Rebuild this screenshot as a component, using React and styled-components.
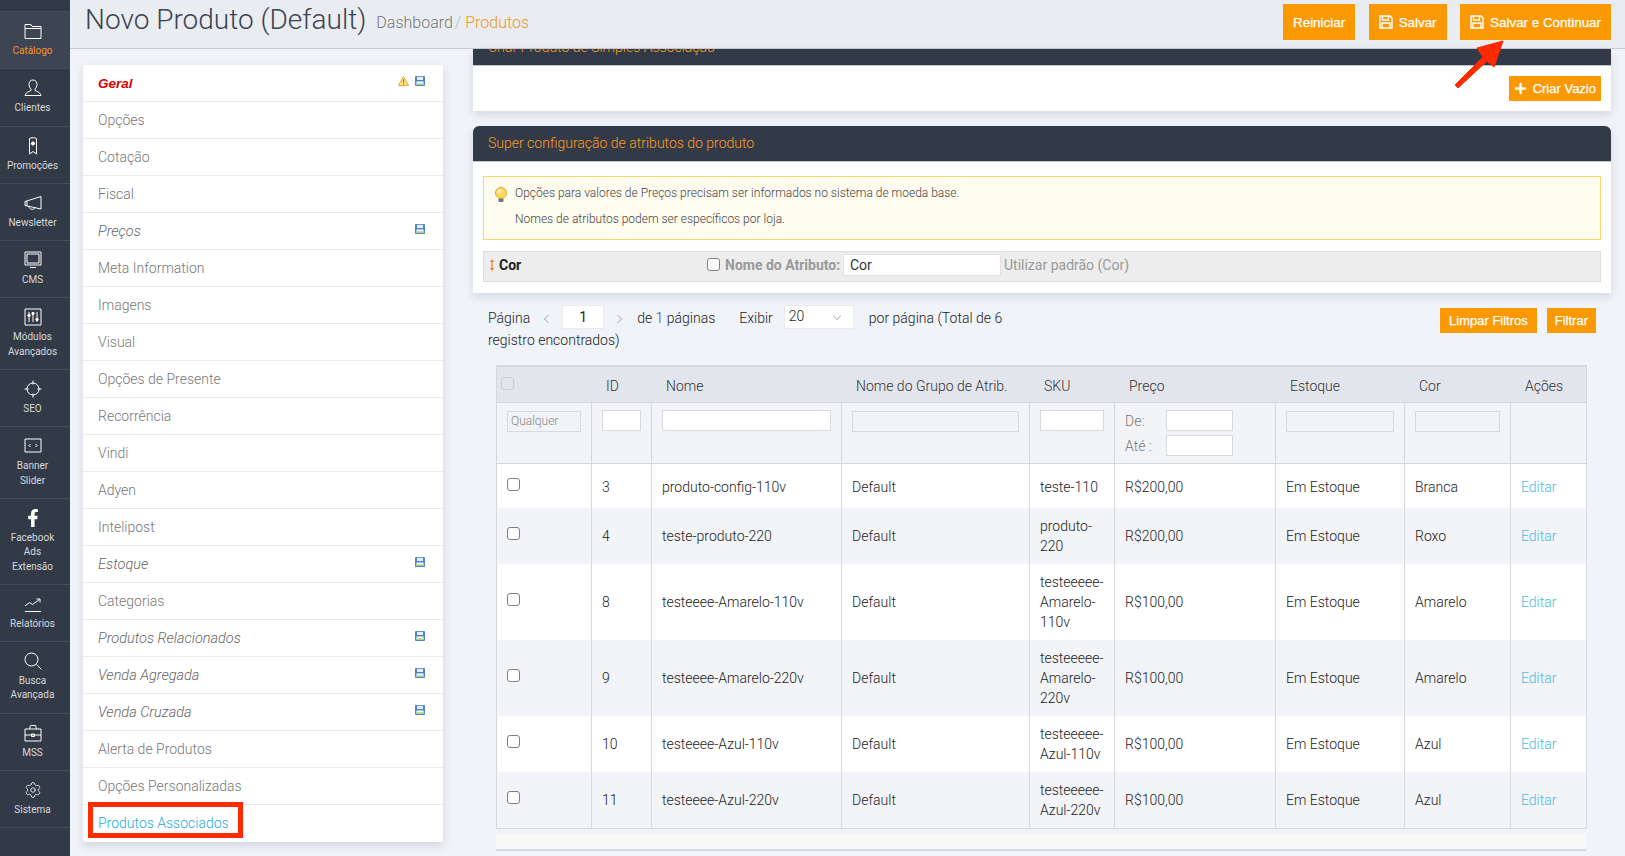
import React from 'react'
import styled, { createGlobalStyle } from 'styled-components'
import { Settings } from 'lucide-react'
import { FaFacebookF, FaPlus } from 'react-icons/fa'

const orange = '#fb9905'
const dark = '#333a47'

const GlobalStyle = createGlobalStyle`
  html, body { margin: 0; height: 100%; overflow: hidden; background: #f0f3f8; }
  body { font-family: Roboto, "Liberation Sans", sans-serif; font-size: 14px; color: #333; }
  * { box-sizing: border-box; }
`

const Shell = styled.div`
  position: relative;
  display: flex;
  width: 1625px;
  height: 856px;
  overflow: hidden;
`

/* ---- sidebar ---- */
const Sidebar = styled.nav`
  flex: 0 0 70px;
  background: ${dark};
  padding-top: 11px;
`
const SideItem = styled.a`
  display: flex;
  flex-direction: column;
  align-items: center;
  padding: 10px 5px 10px 0;
  border-top: 1px solid #434a58;
  background: ${p => (p.$active ? '#3d4452' : 'transparent')};
  color: ${p => (p.$active ? '#f7941d' : '#d5d8dc')};
  font-size: 10px;
  line-height: 14.3px;
  text-align: center;
  svg { display: block; width: 18px; height: 18px; margin-bottom: 4px; color: #fff; }
  &:last-child { border-bottom: 1px solid #434a58; }
`
const Line = styled.svg.attrs({ viewBox: '0 0 18 18', fill: 'none', stroke: 'currentColor', strokeWidth: 1 })``

const icons = {
  folder: <Line><path d="M1 2.5h6l1 2h9v12H1z M1 6.5h16" /></Line>,
  user: <Line><path d="M9 1c-2.500 0-4 2-4 4.500 0 2 1 3.500 2 4.500v1.500c-2 1-5.500 2-6 5h16c-.5-3-4-4-6-5V10c1-1 2-2.500 2-4.500C13 3 11.500 1 9 1z" /></Line>,
  ribbon: <Line><path d="M5.500 1.500c1-1 6-1 7 0V17L9 14.500 5.500 17z" /><circle cx="9" cy="6.500" r="1.600" fill="currentColor" /></Line>,
  megaphone: <Line><path d="M1 7.500v4l16 3.500V2.500z M1 7.500h2v4H1 M5 12.500c0 3 5 4 6 1" /></Line>,
  monitor: <Line><path d="M1 1h16v13H1z M3 3h12v9H3z M6 16.500h6" /></Line>,
  sliders: <Line><path d="M1 1h16v16H1z M5 4v10 M9 4v10 M13 4v10" /><circle cx="5" cy="7.500" r="1.200" fill="currentColor" /><circle cx="9" cy="5.500" r="1.200" fill="currentColor" /><circle cx="13" cy="11.500" r="1.200" fill="currentColor" /></Line>,
  target: <Line><circle cx="9" cy="9" r="6" /><path d="M9 .5v4 M9 13.500v4 M.5 9h4 M13.500 9h4" /></Line>,
  banner: <Line><path d="M1 2h16v13H1z M6.500 7l-1.500 1.500L6.500 10 M11.500 7L13 8.500 11.500 10" /></Line>,
  chart: <Line><path d="M1 16.500h16 M1 11l4.500-3.500 3 2 7-5 M12.500 4h3.500v3.500" /></Line>,
  search: <Line><circle cx="7.500" cy="7.500" r="6.500" /><path d="M12.500 12.500l5 5" /></Line>,
  case: <Line><path d="M1 5h16v12H1z M1 11h16 M5.500 5l1-3.500h5L12.500 5 M7.500 10h3v2.500h-3z" /></Line>,
}

const sideItems = [
  { label: ['Catálogo'], icon: icons.folder, active: true },
  { label: ['Clientes'], icon: icons.user },
  { label: ['Promoções'], icon: icons.ribbon },
  { label: ['Newsletter'], icon: icons.megaphone },
  { label: ['CMS'], icon: icons.monitor },
  { label: ['Módulos', 'Avançados'], icon: icons.sliders },
  { label: ['SEO'], icon: icons.target },
  { label: ['Banner', 'Slider'], icon: icons.banner },
  { label: ['Facebook', 'Ads', 'Extensão'], icon: <FaFacebookF /> },
  { label: ['Relatórios'], icon: icons.chart },
  { label: ['Busca', 'Avançada'], icon: icons.search },
  { label: ['MSS'], icon: icons.case },
  { label: ['Sistema'], icon: <Settings strokeWidth={1.1} /> },
]

/* ---- header ---- */
const Main = styled.div`
  flex: 1;
  display: flex;
  flex-direction: column;
  min-width: 0;
`
const Header = styled.header`
  flex: 0 0 49px;
  display: flex;
  align-items: flex-start;
  padding: 0 14px 0 15px;
  background: #e9ecf1;
  border-bottom: 1px solid #c6c9ce;
`
const Title = styled.h1`
  margin: 0;
  font-size: 28px;
  font-weight: 300;
  line-height: 40px;
  color: #3c4450;
`
const Crumbs = styled.div`
  margin: 13px auto 0 10px;
  font-size: 16px;
  font-weight: 300;
  line-height: 20px;
  color: #777;
  i { font-style: normal; color: #bbb; padding: 0 2px; }
  b { font-weight: 300; color: #f7941d; padding-left: 2px; }
`
const Actions = styled.div`
  display: flex;
  gap: 13.5px;
  padding-top: 4px;
`
const Btn = styled.button`
  display: inline-flex;
  align-items: center;
  gap: 6px;
  height: ${p => (p.$small ? '25px' : '36px')};
  padding: 0 ${p => p.$pad || 10}px;
  border: 0;
  background: ${orange};
  color: #fff;
  font-family: "Liberation Sans", Arial, sans-serif;
  font-size: ${p => (p.$small ? '13px' : '13.4px')};
  -webkit-text-stroke: .25px #fff;
`
const FloppySvg = styled.svg.attrs({ viewBox: '0 0 14 14', fill: 'none', stroke: '#fff', strokeWidth: 1.4 })`
  width: 14px;
  height: 14px;
`
const Floppy = () => (
  <FloppySvg><path d="M1 1h10l2 2v10H1z M3.500 1v4h6V1 M3 13V8h8v5" /></FloppySvg>
)

/* ---- left tabs ---- */
const Content = styled.div`
  flex: 1;
  display: flex;
  gap: 30px;
  padding-left: 13px;
  min-height: 0;
`
const Tabs = styled.ul`
  flex: 0 0 360px;
  align-self: flex-start;
  margin: 16px 0 0;
  padding: 0;
  list-style: none;
  background: #fff;
  border-radius: 2px;
  box-shadow: 0 4px 8px rgba(60, 70, 90, .16);
`
const Tab = styled.li`
  position: relative;
  display: flex;
  align-items: center;
  gap: 6px;
  height: 37px;
  padding: 0 18px 0 15px;
  border-bottom: 1px solid #e8eaed;
  font-size: ${p => (p.$italic ? '14.5px' : '14px')};
  font-weight: 300;
  font-style: ${p => (p.$italic ? 'italic' : 'normal')};
  color: ${p => (p.$italic ? '#666' : '#777')};
  span { flex: 1; }
  &:last-child { border-bottom: 0; color: #29abe2; padding-bottom: 2px; }
`
const TabStrong = styled.span`
  font-family: "Liberation Sans", Arial, sans-serif;
  font-size: 13.5px;
  font-weight: 700;
  font-style: italic;
  color: #dc0000;
`
const RedMark = styled.div`
  position: absolute;
  left: 5px;
  top: -3px;
  width: 155px;
  height: 36px;
  border: 5px solid #ff2a00;
`
const TabIcon = styled.svg`
  flex: none;
  height: 10px;
  margin-top: -5px;
`
const SaveMark = () => (
  <TabIcon viewBox="0 0 10 10" width="10">
    <rect width="10" height="10" rx="1" fill="#4f82cf" />
    <rect x="2" y=".8" width="6" height="3.200" fill="#e8eef8" />
    <rect x="1.500" y="5.500" width="7" height="3.500" fill="#fff" />
    <rect x="1.500" y="7.300" width="7" height="1.700" fill="#a9d678" />
  </TabIcon>
)
const WarnMark = () => (
  <TabIcon viewBox="0 0 11 10" width="11">
    <path d="M5.500 .5 10.600 9.500H.4z" fill="#ffe27a" stroke="#d49a2c" strokeWidth=".8" />
    <path d="M5.500 3.300v3.200M5.500 7.300v1" stroke="#8a5a10" strokeWidth=".9" />
  </TabIcon>
)

const tabs = [
  ['Geral', 'geral'], ['Opções'], ['Cotação'], ['Fiscal'], ['Preços', 'save'], ['Meta Information'],
  ['Imagens'], ['Visual'], ['Opções de Presente'], ['Recorrência'], ['Vindi'], ['Adyen'], ['Intelipost'],
  ['Estoque', 'save'], ['Categorias'], ['Produtos Relacionados', 'save'], ['Venda Agregada', 'save'],
  ['Venda Cruzada', 'save'], ['Alerta de Produtos'], ['Opções Personalizadas'], ['Produtos Associados'],
]

/* ---- right panels ---- */
const Right = styled.div`
  flex: 0 0 1138px;
  display: flex;
  flex-direction: column;
`
const Panel = styled.section`
  background: #fff;
  box-shadow: 0 4px 8px rgba(60, 70, 90, .14);
  margin-bottom: ${p => (p.$gap || 0)}px;
`
const PanelHead = styled.div`
  height: ${p => (p.$cut ? '17px' : '36px')};
  overflow: hidden;
  padding-left: 15px;
  background: ${dark};
  border-bottom: 1px solid #c0c3c9;
  border-radius: ${p => (p.$cut ? '0' : '6px 6px 0 0')};
  color: #fb9a20;
  font-size: 14px;
  line-height: 35px;
  font-weight: 300;
`
const CutText = styled.div`
  margin-top: -19px;
`
const EmptyBody = styled.div`
  display: flex;
  justify-content: flex-end;
  height: 45px;
  padding: 10px 10px 0 0;
`
const PanelBody = styled.div`
  padding: 14px 10px 11px;
`
const Notice = styled.div`
  display: flex;
  gap: 7px;
  height: 64px;
  padding: 3px 9px 0 10px;
  background: #fffbef;
  border: 1px solid #fbd56e;
  font-size: 12px;
  font-weight: 300;
  line-height: 26px;
  color: #444;
  p { margin: 0; }
`
const BulbSvg = styled.svg.attrs({ viewBox: '0 0 14 16' })`
  flex: 0 0 14px;
  width: 14px;
  height: 16px;
  margin-top: 7px;
`
const AttrRow = styled.div`
  display: flex;
  align-items: center;
  height: 31px;
  margin-top: 11px;
  padding-bottom: 4px;
  background: #ededed;
  border: 1px solid #ddd;
  color: #999;
`
const AttrName = styled.div`
  flex: 0 0 223px;
  display: flex;
  align-items: center;
  gap: 5px;
  padding-left: 6px;
  font-weight: 700;
  color: #222;
`
const AttrLabel = styled.label`
  display: flex;
  align-items: center;
  gap: 5px;
  width: 136px;
  font-weight: 700;
`
const AttrInput = styled.input`
  width: 158px;
  height: 22px;
  margin-right: 3px;
  padding: 0 6px;
  border: 1px solid #e2e2e2;
  background: #fff;
  color: #333;
  font: 14px Roboto, sans-serif;
`
const Check = styled.input.attrs({ type: 'checkbox' })`
  appearance: none;
  flex: none;
  width: 13px;
  height: 13px;
  margin: 0;
  background: ${p => (p.disabled ? '#e4e6ea' : '#fff')};
  border: 1px solid ${p => (p.disabled ? '#c9ccd2' : '#808080')};
  border-radius: 3px;
`

/* ---- pager ---- */
const PagerBar = styled.div`
  display: flex;
  justify-content: space-between;
  height: 60px;
  margin-top: 12px;
  padding: 0 15px;
`
const PagerText = styled.div`
  width: 530px;
  padding-top: 2px;
  font-weight: 300;
  color: #222;
  line-height: 22px;
  b { font-weight: 300; color: #4a4a8a; }
`
const PageInput = styled.span`
  display: inline-block;
  width: 42px;
  height: 24px;
  margin: -2px 11px 0;
  background: #fff;
  border: 1px solid #e8eaee;
  text-align: center;
  font-weight: 400;
  line-height: 22px;
  vertical-align: top;
`
const Chev = styled.span`
  display: inline-block;
  width: 6px;
  height: 6px;
  margin: ${p => p.$m};
  border-left: 1px solid #bbb;
  border-bottom: 1px solid #bbb;
  transform: rotate(${p => p.$rot});
  vertical-align: ${p => p.$va || '1px'};
`
const PageSelect = styled.span`
  display: inline-flex;
  justify-content: space-between;
  align-items: center;
  width: 70px;
  height: 24px;
  margin: -2px 15px 0 11px;
  padding: 0 13px 2px 4px;
  background: #fff;
  border: 1px solid #e8eaee;
  vertical-align: top;
`
const Gap = styled.span`
  display: inline-block;
  width: ${p => p.$w}px;
`
const FilterBtns = styled.div`
  display: flex;
  gap: 10px;
  padding: 3px 0 0;
  height: 28px;
`

/* ---- grid ---- */
const Table = styled.table`
  width: 1090px;
  margin-left: 23px;
  border-collapse: separate;
  border-spacing: 0;
  table-layout: fixed;
  font-weight: 300;
  color: #222;
  border-top: 2px solid #d6d8dd;
  border-left: 1px solid #d6d8dd;
`
const HeadRow = styled.tr`
  height: 36px;
  background: #e2e5ec;
  th {
    padding: 2px 0 0 14px;
    font-weight: 300;
    text-align: left;
    color: #333;
    border-bottom: 1px solid #d6d8dd;
  }
  th:first-child { padding: 0 0 0 4px; }
  th:last-child { border-right: 1px solid #d6d8dd; }
`
const FilterRow = styled.tr`
  height: 61px;
  background: #f2f4f8;
  td {
    padding: 7px 10px 0;
    vertical-align: top;
    border-right: 1px solid #d6d8dd;
    border-bottom: 1px solid #d6d8dd;
  }
`
const DataRow = styled.tr`
  background: ${p => (p.$alt ? '#f2f4f8' : '#fff')};
  td {
    height: 44px;
    padding: 8px 10px;
    line-height: 20px;
    border-right: 1px solid #d9dbe0;
  }
  &:first-child td { padding: 9px 10px 7px; }
  &:last-child td { border-bottom: 1px solid #d6d8dd; }
`
const Field = styled.span`
  display: block;
  flex: none;
  width: ${p => p.$w}px;
  height: 21px;
  margin-top: ${p => (p.$off ? '1px' : '0')};
  padding-left: 3px;
  background: ${p => (p.$off ? '#f2f3f6' : '#fff')};
  border: 1px solid #d9dadf;
  font-size: 12px;
  line-height: 19px;
  color: #888;
`
const PriceLine = styled.div`
  display: flex;
  align-items: center;
  height: 21px;
  margin-bottom: 4px;
  color: #777;
  em { flex: 0 0 41px; font-style: normal; }
`
const RowCheck = styled(Check)`
  display: block;
  margin: -5px 0 0 0;
`
const EditLink = styled.a`
  color: #4dbbe0;
`
const TableEnd = styled.div`
  height: 17px;
  margin: 5px 0 0 23px;
  width: 1090px;
  background: #f8f8f8;
  border-bottom: 2px solid #d4d7dd;
`
const Arrow = styled.svg.attrs({ viewBox: '0 0 60 60' })`
  position: absolute;
  left: 1450px;
  top: 36px;
  width: 60px;
  height: 60px;
`

const rows = [
  ['3', 'produto-config-110v', 'teste-110', 'R$200,00', 'Branca'],
  ['4', 'teste-produto-220', 'produto-220', 'R$200,00', 'Roxo'],
  ['8', 'testeeee-Amarelo-110v', 'testeeeee-Amarelo-110v', 'R$100,00', 'Amarelo'],
  ['9', 'testeeee-Amarelo-220v', 'testeeeee-Amarelo-220v', 'R$100,00', 'Amarelo'],
  ['10', 'testeeee-Azul-110v', 'testeeeee-Azul-110v', 'R$100,00', 'Azul'],
  ['11', 'testeeee-Azul-220v', 'testeeeee-Azul-220v', 'R$100,00', 'Azul'],
]
const colWidths = [95, 60, 190, 188, 85, 161, 129, 106, 76]

export default function App() {
  return <>
    <GlobalStyle />
    <Shell>
      <Sidebar>
        {sideItems.map(item => (
          <SideItem key={item.label[0]} $active={item.active}>
            {item.icon}
            {item.label.map(l => <div key={l}>{l}</div>)}
          </SideItem>
        ))}
      </Sidebar>
      <Main>
        <Header>
          <Title>Novo Produto (Default)</Title>
          <Crumbs>Dashboard<i>/</i><b>Produtos</b></Crumbs>
          <Actions>
            <Btn>Reiniciar</Btn>
            <Btn><Floppy />Salvar</Btn>
            <Btn><Floppy />Salvar e Continuar</Btn>
          </Actions>
        </Header>
        <Content>
          <Tabs>
            {tabs.map(([name, kind], i) => (
              <Tab key={name} $italic={kind === 'save'}>
                {kind === 'geral' ? <TabStrong>{name}</TabStrong> : <span>{name}</span>}
                {kind === 'geral' && <WarnMark />}
                {(kind === 'geral' || kind === 'save') && <SaveMark />}
                {i === tabs.length - 1 && <RedMark />}
              </Tab>
            ))}
          </Tabs>
          <Right>
            <Panel $gap={15}>
              <PanelHead $cut><CutText>Criar Produto de Simples Associação</CutText></PanelHead>
              <EmptyBody>
                <Btn $small $pad={5}><FaPlus size={13} />Criar Vazio</Btn>
              </EmptyBody>
            </Panel>
            <Panel>
              <PanelHead>Super configuração de atributos do produto</PanelHead>
              <PanelBody>
                <Notice>
                  <BulbSvg>
                    <circle cx="7" cy="6" r="5.500" fill="#ffd95a" stroke="#d9a93a" />
                    <circle cx="5.500" cy="4.500" r="2" fill="#fff4bf" />
                    <rect x="4.500" y="11.500" width="5" height="3.500" rx="1" fill="#777" />
                  </BulbSvg>
                  <div>
                    <p>Opções para valores de Preços precisam ser informados no sistema de moeda base.</p>
                    <p>Nomes de atributos podem ser específicos por loja.</p>
                  </div>
                </Notice>
                <AttrRow>
                  <AttrName>
                    <svg width="4" height="12" viewBox="0 0 4 12"><path d="M2 0l2 3H2.600v6H4l-2 3-2-3h1.400V3H0z" fill="#f47a20" /></svg>
                    Cor
                  </AttrName>
                  <AttrLabel><Check />Nome do Atributo:</AttrLabel>
                  <AttrInput defaultValue="Cor" />
                  Utilizar padrão (Cor)
                </AttrRow>
              </PanelBody>
            </Panel>
            <PagerBar>
              <PagerText>
                Página<Chev $rot="45deg" $m="0 0 0 15px" />
                <PageInput>1</PageInput>
                <Chev $rot="225deg" $m="0" />
                <Gap $w={16} />de <b>1</b> páginas<Gap $w={24} />Exibir
                <PageSelect>20<Chev $rot="-45deg" $va="0" /></PageSelect>
                por página (Total de 6 registro encontrados)
              </PagerText>
              <FilterBtns>
                <Btn $small $pad={9}>Limpar Filtros</Btn>
                <Btn $small $pad={8}>Filtrar</Btn>
              </FilterBtns>
            </PagerBar>
            <Table>
              <colgroup>{colWidths.map((w, i) => <col key={i} width={w} />)}</colgroup>
              <thead>
                <HeadRow>
                  <th><Check disabled /></th>
                  <th>ID</th><th>Nome</th><th>Nome do Grupo de Atrib.</th><th>SKU</th>
                  <th>Preço</th><th>Estoque</th><th>Cor</th><th>Ações</th>
                </HeadRow>
                <FilterRow>
                  <td><Field $off $w={74}>Qualquer</Field></td>
                  <td><Field $w={39} /></td>
                  <td><Field $w={169} /></td>
                  <td><Field $off $w={167} /></td>
                  <td><Field $w={64} /></td>
                  <td>
                    <PriceLine><em>De:</em><Field $w={67} /></PriceLine>
                    <PriceLine><em>Até :</em><Field $w={67} /></PriceLine>
                  </td>
                  <td><Field $off $w={108} /></td>
                  <td><Field $off $w={85} /></td>
                  <td />
                </FilterRow>
              </thead>
              <tbody>
                {rows.map(([id, name, sku, price, color], i) => (
                  <DataRow key={id} $alt={i % 2 === 1}>
                    <td><RowCheck /></td>
                    <td>{id}</td>
                    <td>{name}</td>
                    <td>Default</td>
                    <td>{sku}</td>
                    <td>{price}</td>
                    <td>Em Estoque</td>
                    <td>{color}</td>
                    <td><EditLink>Editar</EditLink></td>
                  </DataRow>
                ))}
              </tbody>
            </Table>
            <TableEnd />
          </Right>
        </Content>
      </Main>
      <Arrow>
        <path d="M5 49 33 21 27 12 53 5 44 31 37 25 8 52Z" fill="#ff2a00" stroke="#ff2a00" strokeLinejoin="round" />
      </Arrow>
    </Shell>
  </>
}
